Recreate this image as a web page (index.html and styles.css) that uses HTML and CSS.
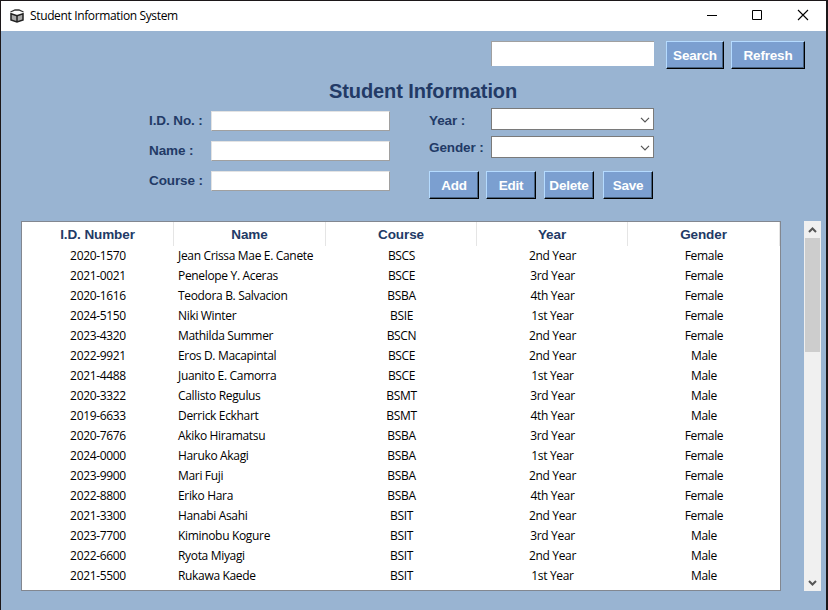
FILE: index.html
```html
<!DOCTYPE html>
<html lang="en">
<head>
<meta charset="utf-8">
<title>Student Information System</title>
<link rel="stylesheet" href="styles.css">
</head>
<body>
<div class="window">
  <header class="titlebar">
    <svg class="app-icon" width="16" height="16" viewBox="0 0 16 16"><path d="M1.500 4 6 2H10L14.500 4" fill="none" stroke="#333" stroke-width="1.300"/><path d="M2 5.700 8 7.700 14 5.700V12L8 14 2 12Z" fill="#aaa" stroke="#222" stroke-width="1.500"/><path d="M8 7.500V14" stroke="#222" stroke-width="1.500"/></svg>
    <span class="caption">Student Information System</span>
    <div class="controls">
      <svg width="46" height="30" viewBox="0 0 46 30"><path d="M18 14.500H28" stroke="#000"/></svg>
      <svg width="46" height="30" viewBox="0 0 46 30"><path d="M17.500 9.500H26.500V18.500H17.500Z" fill="none" stroke="#000"/></svg>
      <svg width="45" height="30" viewBox="0 0 45 30"><path d="M17 9 27 19M27 9 17 19" stroke="#000" stroke-width="1.100"/></svg>
    </div>
  </header>
  <main class="client">
    <div class="search-row">
      <input class="search-input" type="text" aria-label="Search">
      <button class="btn search">Search</button>
      <button class="btn refresh">Refresh</button>
    </div>
    <h1>Student Information</h1>
    <div class="form">
      <div class="fields">
        <label><span class="label">I.D. No. :</span><input class="entry" type="text"></label>
        <label><span class="label">Name :</span><input class="entry" type="text"></label>
        <label><span class="label">Course :</span><input class="entry" type="text"></label>
      </div>
      <div class="side">
        <div class="pick"><span class="label year">Year :</span><div class="combo"><svg width="10" height="6" viewBox="0 0 10 6"><path d="M1 .8 5 4.800 9 .8" fill="none" stroke="#555" stroke-width="1.200"/></svg></div></div>
        <div class="pick"><span class="label">Gender :</span><div class="combo"><svg width="10" height="6" viewBox="0 0 10 6"><path d="M1 .8 5 4.800 9 .8" fill="none" stroke="#555" stroke-width="1.200"/></svg></div></div>
        <div class="actions">
          <button class="btn">Add</button><button class="btn">Edit</button><button class="btn delete">Delete</button><button class="btn save">Save</button>
        </div>
      </div>
    </div>
    <div class="list">
      <div class="tree">
      <table>
        <colgroup><col class="wide"><col class="wide"><col class="mid"><col class="mid"><col class="wide"></colgroup>
        <thead><tr><th>I.D. Number</th><th>Name</th><th>Course</th><th>Year</th><th>Gender</th></tr></thead>
        <tbody>
          <tr><td>2020-1570</td><td>Jean Crissa Mae E. Canete</td><td>BSCS</td><td>2nd Year</td><td>Female</td></tr>
          <tr><td>2021-0021</td><td>Penelope Y. Aceras</td><td>BSCE</td><td>3rd Year</td><td>Female</td></tr>
          <tr><td>2020-1616</td><td>Teodora B. Salvacion</td><td>BSBA</td><td>4th Year</td><td>Female</td></tr>
          <tr><td>2024-5150</td><td>Niki Winter</td><td>BSIE</td><td>1st Year</td><td>Female</td></tr>
          <tr><td>2023-4320</td><td>Mathilda Summer</td><td>BSCN</td><td>2nd Year</td><td>Female</td></tr>
          <tr><td>2022-9921</td><td>Eros D. Macapintal</td><td>BSCE</td><td>2nd Year</td><td>Male</td></tr>
          <tr><td>2021-4488</td><td>Juanito E. Camorra</td><td>BSCE</td><td>1st Year</td><td>Male</td></tr>
          <tr><td>2020-3322</td><td>Callisto Regulus</td><td>BSMT</td><td>3rd Year</td><td>Male</td></tr>
          <tr><td>2019-6633</td><td>Derrick Eckhart</td><td>BSMT</td><td>4th Year</td><td>Male</td></tr>
          <tr><td>2020-7676</td><td>Akiko Hiramatsu</td><td>BSBA</td><td>3rd Year</td><td>Female</td></tr>
          <tr><td>2024-0000</td><td>Haruko Akagi</td><td>BSBA</td><td>1st Year</td><td>Female</td></tr>
          <tr><td>2023-9900</td><td>Mari Fuji</td><td>BSBA</td><td>2nd Year</td><td>Female</td></tr>
          <tr><td>2022-8800</td><td>Eriko Hara</td><td>BSBA</td><td>4th Year</td><td>Female</td></tr>
          <tr><td>2021-3300</td><td>Hanabi Asahi</td><td>BSIT</td><td>2nd Year</td><td>Female</td></tr>
          <tr><td>2023-7700</td><td>Kiminobu Kogure</td><td>BSIT</td><td>3rd Year</td><td>Male</td></tr>
          <tr><td>2022-6600</td><td>Ryota Miyagi</td><td>BSIT</td><td>2nd Year</td><td>Male</td></tr>
          <tr><td>2021-5500</td><td>Rukawa Kaede</td><td>BSIT</td><td>1st Year</td><td>Male</td></tr>
        </tbody>
      </table>
      </div>
      <div class="scrollbar">
        <svg width="15" height="17" viewBox="0 0 15 17"><path d="M4 11 7.500 7.500 11 11" fill="none" stroke="#555" stroke-width="2"/></svg>
        <div class="thumb"></div>
        <svg class="down" width="15" height="17" viewBox="0 0 15 17"><path d="M4 7 7.500 10.500 11 7" fill="none" stroke="#555" stroke-width="2"/></svg>
      </div>
    </div>
  </main>
</div>
</body>
</html>
```
FILE: styles.css
```css
* { box-sizing: border-box; }
body { margin: 0; overflow: hidden; }
.window {
  width: 828px; height: 610px;
  border: solid #1c1719; border-width: 1px 2px 0 1px;
  background: #99b4d2;
  font-family: "Open Sans", "Noto Sans", sans-serif;
  font-size: 12px; color: #000;
}
.titlebar { display: flex; align-items: center; height: 30px; padding-left: 8px; background: #fff; }
.app-icon { margin-right: 5px; }
.caption { font-size: 12px; letter-spacing: -0.36px; margin-top: -1px; }
.controls { display: flex; margin-left: auto; }
.client { padding: 10px 0 0 20px; font-family: "Liberation Sans", Arial, sans-serif; }
.search-row { display: flex; align-items: flex-start; padding-left: 470px; height: 28px; }
.search-input { width: 163px; height: 25px; margin-right: 12px; border: solid #a0a0a0; border-width: 1px 0 0 1px; padding: 0; background: #fff; }
.btn {
  width: 50px; height: 28px; padding: 1px 0 0;
  background: #7b9fd0; color: #fff;
  border: 1px solid; border-color: #b5dbff #000 #000 #b5dbff;
  box-shadow: inset -1px -1px 0 #46617f;
  font: bold 13.5px "Liberation Sans", Arial, sans-serif; letter-spacing: -0.2px;
}
.search { width: 58px; margin-right: 7px; }
.refresh { width: 74px; }
h1 { margin: 10px 0 0 308px; font-size: 20px; line-height: 24px; letter-spacing: -0.1px; color: #223a66; }
.form { display: flex; padding: 5px 0 0 128px; height: 118px; }
.label { font-weight: bold; font-size: 13.5px; letter-spacing: -0.1px; color: #223a66; width: 62px; }
.label.year { padding-top: 2px; }
.fields { display: grid; grid-auto-rows: 20px; row-gap: 10px; width: 280px; padding-top: 3px; }
.fields label { display: flex; align-items: center; }
.fields .label { padding-bottom: 2px; }
.entry { width: 179px; height: 20px; padding: 0; border: 1px solid; border-color: #e3e3e3 #a0a0a0 #a0a0a0 #e3e3e3; background: #fff; }
.pick { display: flex; align-items: center; height: 22px; margin-bottom: 6px; }
.combo { display: flex; align-items: center; justify-content: flex-end; width: 163px; height: 22px; padding: 1px 3px 0 0; border: 1px solid #7a7a7a; background: #fff; }
.actions { display: flex; margin-top: 13px; }
.actions .btn { margin-right: 7px; }
.actions .delete { margin: 0 9px 0 1px; }
.actions .save { margin: 0; }
.list { display: flex; }
.tree { width: 760px; height: 370px; border: 1px solid #828790; background: #fff; }
table {
  width: 758px; table-layout: fixed;
  border-collapse: separate; border-spacing: 0;
  font-family: "Open Sans", "Noto Sans", sans-serif;
}
.wide { width: 152px; }
.mid { width: 151px; }
th { height: 24px; padding: 0; border-right: 1px solid #e5e5e5; font: bold 13.5px "Liberation Sans", Arial, sans-serif; letter-spacing: -0.1px; color: #223a66; }
td { height: 20px; padding: 0; text-align: center; line-height: 20px; letter-spacing: -0.33px; white-space: nowrap; }
td:nth-child(2) { padding-left: 4px; text-align: left; }
.scrollbar { display: flex; flex-direction: column; width: 17px; height: 370px; margin-left: 23px; padding: 0 1px; background: #f0f0f0; }
.thumb { height: 114px; background: #cdcdcd; }
.down { margin-top: auto; }
```
